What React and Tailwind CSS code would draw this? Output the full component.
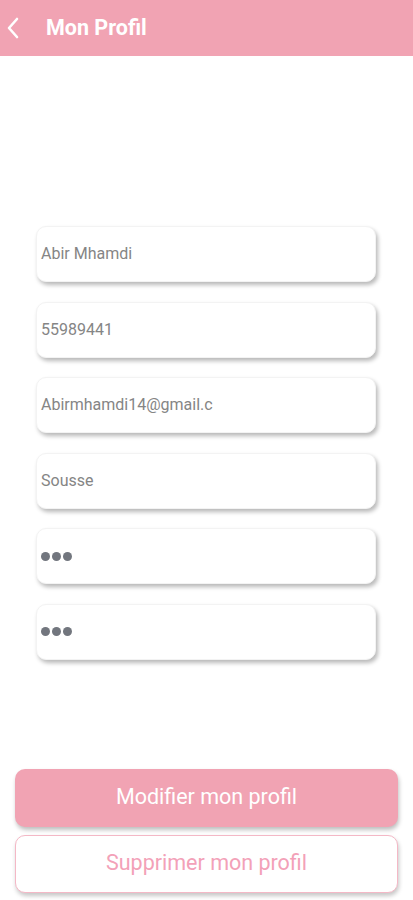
import React from 'react';

const fields = [
  { value: 'Abir Mhamdi', type: 'text' },
  { value: '55989441', type: 'text' },
  { value: 'Abirmhamdi14@gmail.c', type: 'text' },
  { value: 'Sousse', type: 'text' },
  { value: '', type: 'password' },
  { value: '', type: 'password' },
];

function Dots() {
  return (
    <div className="flex items-center gap-[2px]">
      <span className="w-[9px] h-[9px] rounded-full bg-[#72767e]" />
      <span className="w-[9px] h-[9px] rounded-full bg-[#72767e]" />
      <span className="w-[9px] h-[9px] rounded-full bg-[#72767e]" />
    </div>
  );
}

export default function App() {
  return (
    <div className="min-h-screen bg-white font-['Roboto',sans-serif] flex flex-col w-[413px] h-[900px]">
      <div className="h-14 bg-[#f1a3b3] flex items-center">
        <svg width="14" height="24" viewBox="0 0 14 24" className="ml-[6px]" fill="none">
          <path d="M11 3 L3 12 L11 21" stroke="white" strokeWidth="2.6" strokeLinecap="round" strokeLinejoin="round" />
        </svg>
        <h1 className="ml-[26px] text-white font-bold text-[21.5px]">Mon Profil</h1>
      </div>

      <div className="flex flex-col gap-[19.5px] pt-[170px] px-[36px] pr-[37px]">
        {fields.map((f, i) => (
          <div
            key={i}
            className="h-14 rounded-[10px] bg-white border border-[#f3f3f3] shadow-[2px_3px_4px_rgba(0,0,0,0.28)] flex items-center pl-[4px]"
          >
            {f.type === 'password' ? (
              <Dots />
            ) : (
              <span className="text-[16px] text-[#858585]">{f.value}</span>
            )}
          </div>
        ))}
      </div>

      <div className="flex flex-col gap-2 px-[15px] mt-[109px]">
        <button className="h-[58px] rounded-[10px] bg-[#f1a3b3] text-white text-[21.5px] shadow-[1px_3px_4px_rgba(0,0,0,0.25)]">
          Modifier mon profil
        </button>
        <button className="h-[58px] rounded-[10px] bg-white border border-[#f4b8c6] text-[#f3a1b8] text-[21.5px] shadow-[1px_3px_4px_rgba(0,0,0,0.22)]">
          Supprimer mon profil
        </button>
      </div>
    </div>
  );
}
